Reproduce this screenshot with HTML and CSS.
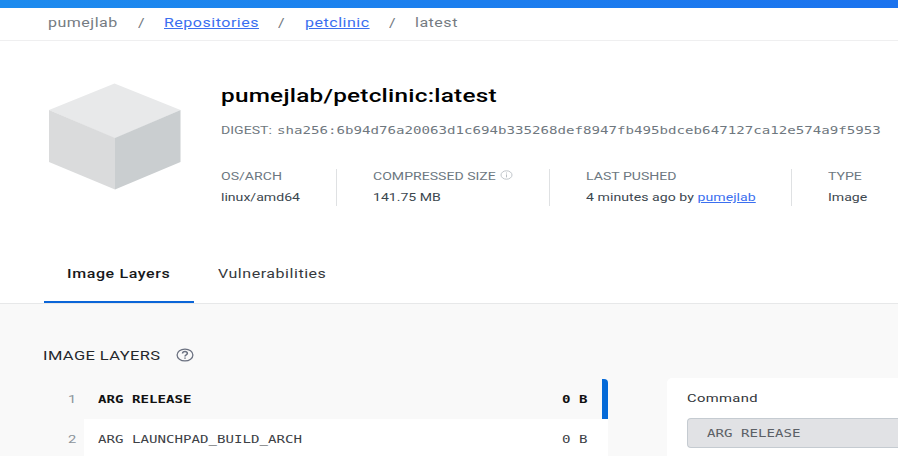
FILE: index.html
```html
<!DOCTYPE html>
<html lang="en">
<head>
<meta charset="utf-8">
<title>pumejlab/petclinic:latest</title>
<link rel="stylesheet" href="styles.css">
</head>
<body>
<div class="topbar"></div>
<nav class="crumbs">
  <span class="crumb crumb-owner"><span class="wide">pumejlab</span></span>
  <span class="crumb crumb-sep-a"><span class="wide">/</span></span>
  <span class="crumb crumb-repos"><a class="wide">Repositories</a></span>
  <span class="crumb crumb-sep-b"><span class="wide">/</span></span>
  <span class="crumb crumb-repo"><a class="wide">petclinic</a></span>
  <span class="crumb crumb-sep-a"><span class="wide">/</span></span>
  <span class="crumb"><span class="wide">latest</span></span>
</nav>
<header class="summary">
  <svg class="box" viewBox="0 0 132 107" width="132" height="107">
    <path fill="#e8e9ea" d="M65.500 0.500 131.500 27 66 55.500 0 27z"/>
    <path fill="#dadbdc" d="M0 27 66 55v51.500L0 79z"/>
    <path fill="#caced0" d="M131.500 27 66 55v51.500L131.500 79z"/>
  </svg>
  <div class="details">
    <h1><span class="wide">pumejlab/petclinic:latest</span></h1>
    <div class="digest"><span class="digest-label"><span class="wide">DIGEST:</span></span><span class="wide mono">sha256:6b94d76a20063d1c694b335268def8947fb495bdceb647127ca12e574a9f5953</span></div>
    <div class="facts">
      <div class="fact fact-os"><span class="wide label">OS/ARCH</span><span class="wide">linux/amd64</span></div>
      <div class="fact fact-size"><span class="label size-label"><span class="wide">COMPRESSED SIZE</span>
        <svg width="13" height="10" viewBox="0 0 13 10" fill="none" stroke="#b9bec4"><ellipse cx="6.500" cy="5" rx="5.500" ry="4.200" stroke-width=".9"/><path d="M6.500 4.400v3M6.500 2.500v1"/></svg></span>
        <span class="wide">141.75 MB</span></div>
      <div class="fact fact-pushed"><span class="wide label">LAST PUSHED</span><span class="wide pushed">4 minutes ago by <a>pumejlab</a></span></div>
      <div class="fact fact-type"><span class="wide label">TYPE</span><span class="wide">Image</span></div>
    </div>
  </div>
</header>
<div class="tabs">
  <div class="tab active"><span class="wide">Image Layers</span></div>
  <div class="tab"><span class="wide">Vulnerabilities</span></div>
</div>
<main>
  <section class="layers">
    <h2><span class="wide">IMAGE LAYERS</span>
      <svg width="18" height="14" viewBox="0 0 18 14" fill="none" stroke="#6b7180"><ellipse cx="9" cy="7" rx="7.900" ry="5.900" stroke-width="1.300"/><path d="M6.500 5.500C6.700 3 11.500 3 11.400 5.400 11.300 6.900 9 6.700 9 8.400M9 9.500v1.200" stroke-width="1.500"/></svg>
    </h2>
    <div class="row selected"><span class="num"><span class="wide">1</span></span><div class="cmd mono"><span class="wide">ARG RELEASE</span><span class="size"><span class="wide">0 B</span></span></div></div>
    <div class="row"><span class="num"><span class="wide">2</span></span><div class="cmd mono"><span class="wide">ARG LAUNCHPAD_BUILD_ARCH</span><span class="size"><span class="wide">0 B</span></span></div></div>
  </section>
  <aside class="panel">
    <h3><span class="wide">Command</span></h3>
    <div class="code mono"><span class="wide">ARG RELEASE</span></div>
  </aside>
</main>
</body>
</html>
```
FILE: styles.css
```css
* { box-sizing: border-box; }
body {
  margin: 0;
  height: 456px;
  overflow: hidden;
  background: #fff;
  color: #3c474f;
  font: 11px/20px Roboto, sans-serif;
}
h1, h2, h3 { margin: 0; }
a { color: #3b6ff0; text-decoration: underline; }

/* Horizontally expanded lettering */
.wide {
  display: inline-block;
  transform: scaleX(1.28);
  transform-origin: left center;
  white-space: pre;
}
.mono { font-family: "DejaVu Sans Mono", monospace; font-size: 10.500px; }
.mono .wide, .mono.wide { transform: scaleX(1.345); }

.topbar { height: 8px; background: linear-gradient(90deg, #1d8bee, #1b73ee); }
.crumbs {
  display: flex;
  height: 33px;
  padding-left: 48px;
  border-bottom: 1px solid #efeff0;
  font-size: 12.500px;
  line-height: 30px;
  letter-spacing: .4px;
  color: #757b82;
}
.crumb-owner { width: 90px; }
.crumb-sep-a { width: 26px; }
.crumb-repos { width: 114px; }
.crumb-sep-b { width: 27px; }
.crumb-repo { width: 84px; }

.summary { display: flex; height: 203px; padding: 42px 0 0 49px; }
.box { flex: none; margin-right: 40px; }
.details { flex: 1; }
h1 { height: 26px; font-size: 19px; line-height: 26px; letter-spacing: .19px; font-weight: 500; color: #000; }
.digest { display: flex; height: 20px; margin-top: 12px; line-height: 20px; color: #6f7880; }
.digest .mono { line-height: 19px; }
.digest-label { width: 56px; }
.facts { display: flex; margin-top: 28px; height: 37px; }
.fact { display: flex; flex: none; flex-direction: column; align-items: flex-start; height: 37px; padding-left: 36px; border-left: 1px solid #dfe1e3; line-height: 20px; }
.fact > * { margin-top: -2px; margin-bottom: 3px; height: 20px; }
.fact > :last-child { margin-bottom: 0; }
.fact-os { width: 115px; padding-left: 0; border-left: 0; }
.fact-size { width: 213px; }
.fact-pushed { width: 242px; }
.fact-type { width: 106px; }
.pushed { letter-spacing: .04px; }
.label { color: #6c7781; }
.size-label { display: flex; width: 140px; justify-content: space-between; }
.size-label svg { margin-top: 3px; }

.tabs {
  display: flex;
  height: 60px;
  padding-left: 44px;
  border-bottom: 1px solid #e7e8e9;
  font-size: 12.500px;
  line-height: 60px;
  letter-spacing: .42px;
  color: #36393d;
}
.tab { width: 150px; height: 59px; padding-left: 24px; }
.tab.active { padding-left: 23px; border-bottom: 2px solid #0b65d8; letter-spacing: .48px; font-weight: 500; color: #16181b; }

main { display: flex; height: 152px; background: #f9f9f9; }
.layers { width: 608px; padding: 41px 0 0 43px; }
h2 { display: flex; height: 34px; justify-content: space-between; width: 151px; font-size: 12.500px; letter-spacing: .3px; font-weight: 400; line-height: 21px; color: #25282c; }
h2 .wide { transform: scaleX(1.32); }
h2 svg { margin-top: 3px; }
.row { display: flex; height: 40px; line-height: 40px; }
.num { width: 41px; padding-left: 25px; font-size: 11.500px; color: #8c949b; }
.cmd { display: flex; flex: 1; justify-content: space-between; padding-left: 14px; background: #fff; color: #3d4146; }
.size { width: 46px; }
.selected .cmd { background: #f9f9f9; border-right: 6px solid #056ad8; border-top-right-radius: 4px; color: #111; font-weight: 700; }
.selected .size { width: 40px; }
.panel { width: 231px; margin: 74px 0 0 59px; padding: 10px 0 0 20px; border-radius: 5px 0 0; background: #fff; }
h3 { height: 30px; font-size: 11.500px; line-height: 20px; letter-spacing: .3px; font-weight: 400; color: #303439; }
.code { height: 30px; padding-left: 19px; border: 1px solid #c5cbd1; border-right: 0; border-radius: 4px 0 0 4px; background: #e1e2e5; line-height: 29px; color: #5b6066; }
```
